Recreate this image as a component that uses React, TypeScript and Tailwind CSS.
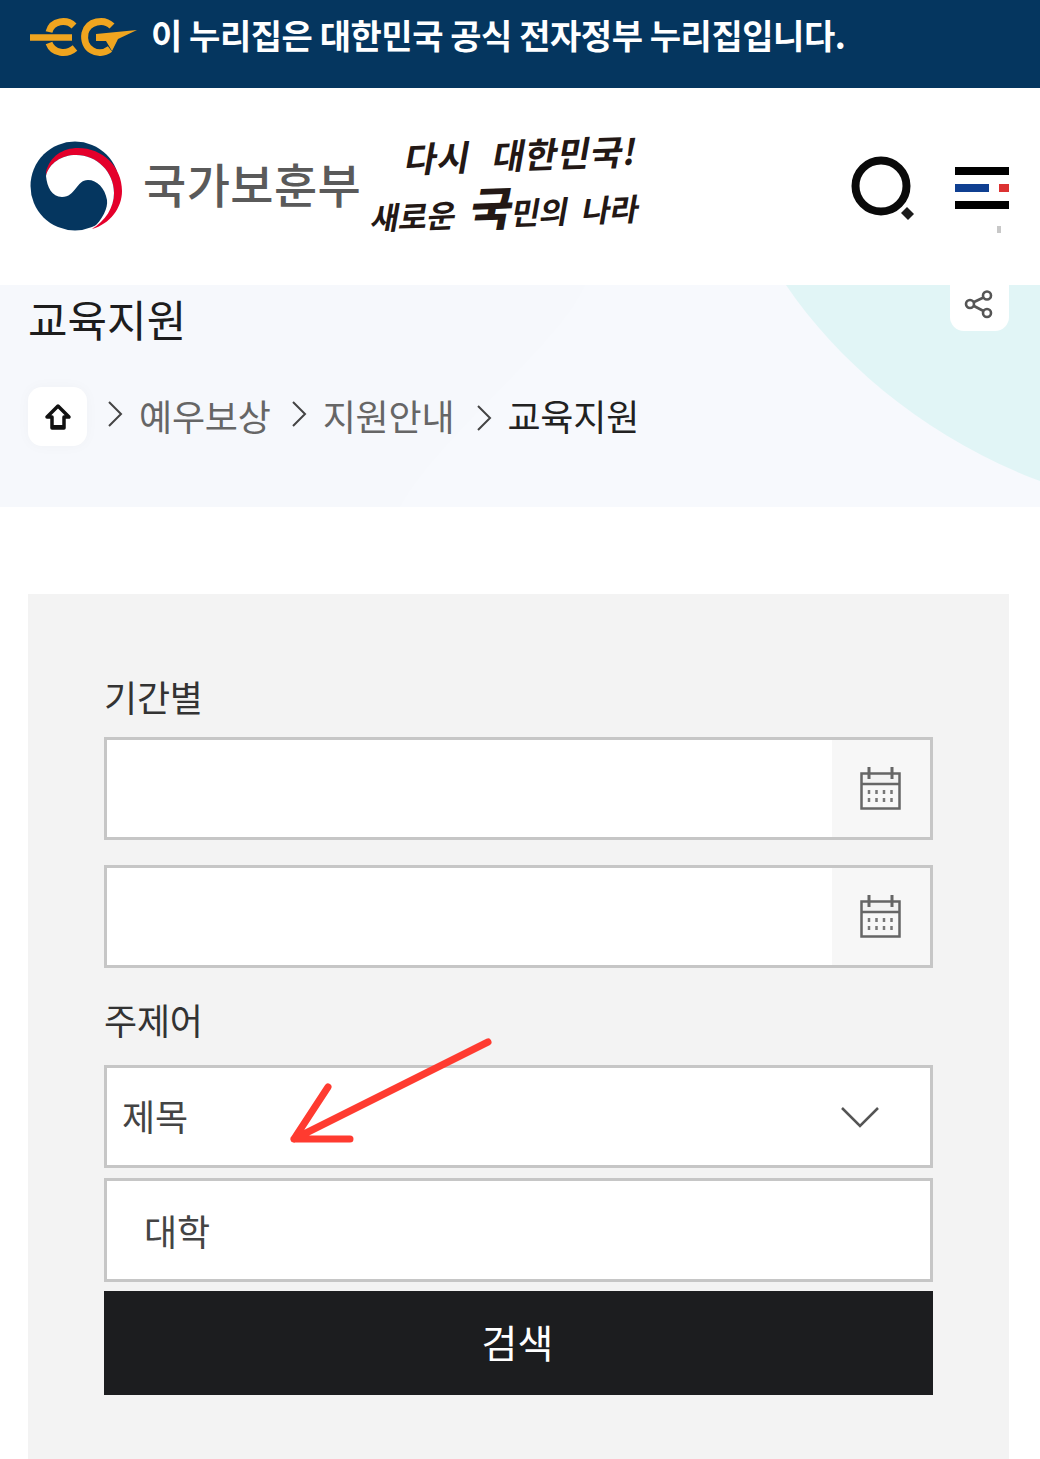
import React from "react";

const KR = "font-['Noto_Sans_CJK_KR','Noto_Sans',sans-serif]";

function EgLogo() {
  return (
    <svg width="110" height="44" viewBox="28 16 110 44" className="shrink-0">
      <g fill="none" stroke="#f0a51f" strokeWidth="7">
        <path d="M30 38.500H72" strokeWidth="6.500" />
        <path d="M74 27C67 20 52 21 49 33" />
        <path d="M49 44C53 55 67 56 75 49" />
        <path d="M112 27C104 19 88 22 85 34C82 50 98 59 110 50" />
      </g>
      <path d="M96 35L137 31L118 40L112 52L106 42L96 42Z" fill="#f0a51f" />
    </svg>
  );
}

function Taegeuk() {
  return (
    <svg width="94" height="90" viewBox="29 141 94 90" className="shrink-0">
      <circle cx="75" cy="186" r="44.500" fill="#05365f" />
      <path d="M46 172C50 156 63 148 78 148C103 148 122 167 122 191C122 208 110 224 92 229C104 219 114 208 114 193C114 172 97 155 76 155C62 155 49 163 46 176Z" fill="#e4002b" />
      <path d="M46 176C49 163 62 155 76 155C97 155 114 172 114 193C114 208 105 221 92 229C103 219 108 208 107 200C105 188 97 180 88 180C76 180 76 197 62 197C52 197 47 187 46 176Z" fill="#fff" />
    </svg>
  );
}

function Chevron({ className }: { className: string }) {
  return (
    <svg width="16" height="28" viewBox="0 0 16 28" className={`shrink-0 ${className}`}>
      <path d="M2 2L14 14L2 26" fill="none" stroke="#444" strokeWidth="2" />
    </svg>
  );
}

function Calendar() {
  return (
    <svg width="42" height="44" viewBox="0 0 42 44">
      <rect x="1.500" y="6.500" width="38" height="35" fill="#f3f3f3" stroke="#666" strokeWidth="2.500" />
      <rect x="3" y="18" width="35" height="22" fill="#f7f7f7" />
      <path d="M1.500 17H39.500" stroke="#666" strokeWidth="2.500" />
      <path d="M9 0V12M32 0V12" stroke="#666" strokeWidth="3" />
      <path d="M9 23v4M16.500 23v4M24 23v4M31.500 23v4M9 31v4M16.500 31v4M24 31v4M31.500 31v4" stroke="#777" strokeWidth="2.500" />
    </svg>
  );
}

function DateField({ className }: { className: string }) {
  return (
    <div className={`flex h-[103px] border-[3px] border-[#c6c6c6] bg-white ${className}`}>
      <div className="flex-1" />
      <div className="flex w-[98px] items-center justify-center bg-[#f7f7f7]">
        <Calendar />
      </div>
    </div>
  );
}

export default function App() {
  return (
    <div className={`flex h-[1459px] w-[1040px] flex-col overflow-hidden bg-white ${KR}`}>
      <div className="flex h-[88px] items-start gap-[13px] bg-[#05365f] pl-[28px] pt-[15px]">
        <EgLogo />
        <span className="-mt-[1px] text-[34px] font-bold leading-[42px] tracking-[-0.45px] text-white">
          이 누리집은 대한민국 공식 전자정부 누리집입니다.
        </span>
      </div>

      <header className="flex h-[197px] items-start bg-white pl-[29px] pr-[31px]">
        <div className="mt-[53px]">
          <Taegeuk />
        </div>
        <span className="ml-[20px] mt-[59px] text-[47px] font-medium leading-[72px] tracking-[0.4px] text-[#5a5a5a]">
          국가보훈부
        </span>
        <div className="ml-[13px] mt-[44px] flex w-[272px] -rotate-2 -skew-x-12 flex-col items-center text-[#231815]">
          <span className="whitespace-nowrap pl-[12px] text-[35px] font-bold leading-[44px] tracking-[0.5px] [word-spacing:14px]">다시 대한민국!</span>
          <span className="whitespace-nowrap text-[31px] font-bold leading-[58px] tracking-[-0.2px] [word-spacing:7px]">
            새로운 <span className="text-[46px] font-black">국</span>민의 나라
          </span>
        </div>
        <div className="ml-auto mt-[68px] flex items-start gap-[37px]">
          <svg width="68" height="68" viewBox="0 0 68 68">
            <circle cx="31" cy="30" r="25.500" fill="none" stroke="#0a0a0a" strokeWidth="8" />
            <path d="M57 51L64 58L58 64L51 57Z" fill="#1c1c1c" />
          </svg>
          <div className="flex w-[54px] flex-col items-stretch pt-[11px]">
            <div className="h-[8px] bg-black" />
            <div className="mt-[9px] flex h-[8px] justify-between">
              <div className="w-[34px] bg-[#0f3f91]" />
              <div className="w-[10px] bg-[#dc3232]" />
            </div>
            <div className="mt-[9px] h-[8px] bg-black" />
            <div className="ml-[42px] mt-[17px] h-[7px] w-[4px] bg-[#c8c8c8]" />
          </div>
        </div>
      </header>

      <section className="relative h-[222px] overflow-hidden bg-[#f6f8fc] pl-[28px]">
        <svg className="absolute inset-0" width="1040" height="222" viewBox="0 0 1040 222">
          <path d="M400 222C440 150 560 60 585 0H1040V222Z" fill="#f7f9fd" />
          <path d="M786 0C840 80 930 155 1040 196V0Z" fill="#e1f5f6" />
        </svg>
        <div className="absolute right-[31px] top-0 flex h-[46px] w-[59px] items-start justify-center rounded-b-[14px] bg-white pt-[4px]">
          <svg width="30" height="30" viewBox="0 0 30 30" fill="none" stroke="#555" strokeWidth="2.600" className="-ml-[2px]">
            <circle cx="23" cy="6.500" r="4" />
            <circle cx="23" cy="24" r="4" />
            <circle cx="6" cy="15" r="4" />
            <path d="M10 13L19.500 8.500M10 17L19.500 22" />
          </svg>
        </div>
        <div className="relative">
          <h1 className="pt-[5px] text-[43px] font-normal leading-[56px] text-[#1d1d1d]">교육지원</h1>
          <div className="mt-[41px] flex items-center text-[36px] leading-[59px] tracking-[-0.2px] text-[#666]">
            <div className="flex h-[59px] w-[59px] items-center justify-center rounded-[14px] bg-white shadow-[0_0_14px_rgba(0,0,0,0.03)]">
              <svg width="30" height="30" viewBox="0 0 30 30">
                <path d="M15 4L26 15H21V26H9V15H4Z" fill="#fff" stroke="#111" strokeWidth="3.500" strokeLinejoin="round" />
                <path d="M9 23H21V27H9Z" fill="#111" />
              </svg>
            </div>
            <div className="ml-[20px]"><Chevron className="-mt-1.5" /></div>
            <span className="-mt-[3px] ml-[16px]">예우보상</span>
            <div className="ml-[20px]"><Chevron className="-mt-1.5" /></div>
            <span className="-mt-[3px] ml-[16px]">지원안내</span>
            <div className="ml-[22px]"><Chevron className="mt-[3px]" /></div>
            <span className="-mt-[3px] ml-[15px] text-[#222]">교육지원</span>
          </div>
        </div>
      </section>

      <main className="relative ml-[28px] mt-[87px] w-[981px] flex-1 bg-[#f3f3f3] px-[76px] pt-[77px]">
        <div className="text-[36px] leading-[50px] tracking-[-0.2px] text-[#333]">기간별</div>
        <DateField className="mt-[16px]" />
        <DateField className="mt-[25px]" />
        <div className="mt-[26px] text-[36px] leading-[50px] tracking-[-0.2px] text-[#333]">주제어</div>
        <div className="mt-[21px] flex h-[103px] items-center justify-between border-[3px] border-[#c6c6c6] bg-white pl-[15px] pr-[51px] text-[36px] text-[#444]">
          <span className="-mt-[3px]">제목</span>
          <svg width="38" height="24" viewBox="0 0 38 24">
            <path d="M1 3L19 21L37 3" fill="none" stroke="#555" strokeWidth="2.500" />
          </svg>
        </div>
        <div className="mt-[10px] flex h-[104px] items-center border-[3px] border-[#c6c6c6] bg-white pl-[37px] text-[36px] text-[#444]">
          대학
        </div>
        <button className="mt-[9px] block h-[104px] w-full bg-[#1c1d1f] pb-[4px] pr-[2px] text-[39px] text-white">검색</button>

        <svg className="absolute left-[256px] top-[440px]" width="212" height="112" viewBox="0 0 212 112">
          <path d="M204 8L10 105M10 105L44 53M10 105H66" fill="none" stroke="#ff3b30" strokeWidth="7" strokeLinecap="round" strokeLinejoin="round" />
        </svg>
      </main>
    </div>
  );
}
